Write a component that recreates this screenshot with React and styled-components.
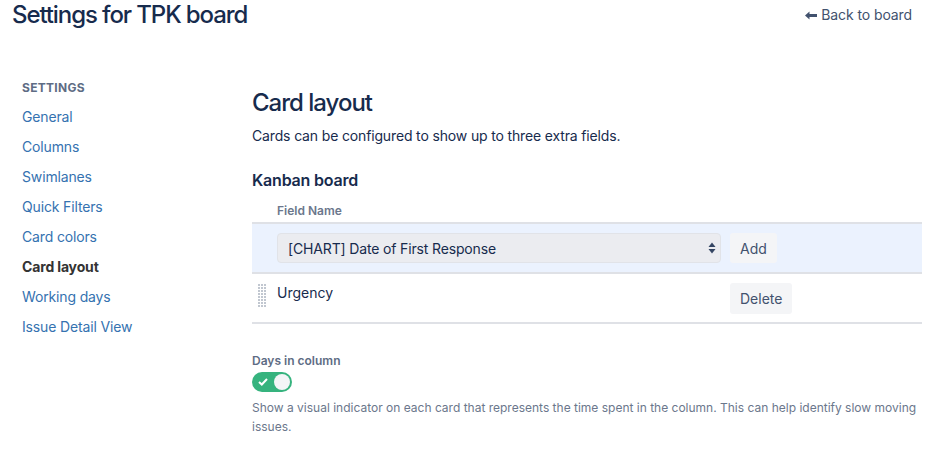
import React from "react";
import styled, { createGlobalStyle } from "styled-components";

const Global = createGlobalStyle`
  html, body { margin: 0; padding: 0; background: #fff; }
  body { font-family: Inter, "Noto Sans", sans-serif; color: #172B4D; }
  * { box-sizing: border-box; }
`;

const Page = styled.div`
  width: 936px;
  height: 456px;
  overflow: hidden;
`;

const Header = styled.header`
  display: flex;
  justify-content: space-between;
  align-items: flex-start;
  padding: 1px 24px 0 12px;
`;

const Title = styled.h1`
  margin: 0;
  font-size: 24px;
  line-height: 28px;
  font-weight: 500;
  color: #172B4D;
  letter-spacing: -1.1px;
`;

const BackLink = styled.a`
  display: flex;
  align-items: center;
  gap: 3px;
  margin-top: 4px;
  font-size: 14px;
  line-height: 20px;
  color: #42526E;
  text-decoration: none;
  letter-spacing: -0.1px;
`;

const Body = styled.div`
  display: grid;
  grid-template-columns: 230px 670px;
  padding: 51px 0 0 22px;
`;

const Sidebar = styled.nav`
  display: flex;
  flex-direction: column;
`;

const SideHeading = styled.div`
  font-size: 12px;
  line-height: 16px;
  font-weight: 700;
  color: #5E6C84;
  letter-spacing: 0.3px;
  margin-bottom: 6px;
`;

const SideItem = styled.a`
  font-size: 14px;
  line-height: 30px;
  color: ${(p) => (p.$active ? "#333333" : "#3572B0")};
  font-weight: ${(p) => (p.$active ? 700 : 400)};
  text-decoration: none;
  letter-spacing: -0.15px;
`;

const Main = styled.main`
  display: flex;
  flex-direction: column;
  padding-top: 9px;
`;

const H2 = styled.h2`
  margin: 0;
  font-size: 24px;
  line-height: 28px;
  font-weight: 500;
  color: #172B4D;
  letter-spacing: -1px;
`;

const Lead = styled.p`
  margin: 9px 0 0;
  font-size: 14px;
  line-height: 20px;
  color: #172B4D;
  letter-spacing: -0.15px;
`;

const H3 = styled.h3`
  margin: 24px 0 0;
  font-size: 16px;
  line-height: 20px;
  font-weight: 600;
  color: #172B4D;
  letter-spacing: -0.2px;
`;

const Table = styled.div`
  margin-top: 13px;
  display: flex;
  flex-direction: column;
`;

const HeadRow = styled.div`
  padding: 0 0 3px 25px;
  font-size: 12px;
  line-height: 16px;
  font-weight: 600;
  color: #6B778C;
  border-bottom: 2px solid #DFE1E6;
`;

const Row = styled.div`
  display: grid;
  grid-template-columns: 25px 444px 1fr;
  align-items: ${(p) => (p.$top ? "start" : "center")};
  height: 50px;
  padding: ${(p) => (p.$top ? "9px 0 0" : "0")};
  background: ${(p) => (p.$highlight ? "#EBF2FE" : "#fff")};
  border-bottom: 2px solid #DFE1E6;
`;

const Handle = styled.div`
  display: flex;
  justify-content: center;
  padding: 1px 4px 0 0;
`;

const Select = styled.div`
  position: relative;
  display: flex;
  align-items: center;
  height: 30px;
  padding: 0 10px;
  background: #EBECF0;
  border: 1px solid #E1E3E8;
  border-radius: 4px;
  font-size: 14px;
  color: #172B4D;
  letter-spacing: -0.15px;
`;

const SelectArrows = styled.svg`
  position: absolute;
  right: 4px;
  top: 8px;
`;

const FieldText = styled.div`
  font-size: 14px;
  line-height: 20px;
  color: #172B4D;
`;

const Actions = styled.div`
  padding-left: 9px;
`;

const Button = styled.button`
  height: ${(p) => (p.$tall ? "31px" : "30px")};
  padding: 0 10px;
  border: none;
  border-radius: 3px;
  background: #F4F5F7;
  color: #42526E;
  font-family: inherit;
  font-size: 14px;
`;

const Label = styled.div`
  margin-top: 29px;
  font-size: 12px;
  line-height: 16px;
  font-weight: 600;
  color: #5E6C84;
`;

const Toggle = styled.div`
  margin-top: 3px;
  width: 40px;
  height: 20px;
  border-radius: 10px;
  background: #36B37E;
  display: flex;
  align-items: center;
  justify-content: space-between;
  padding: 0 2px 0 6px;
`;

const Knob = styled.span`
  width: 16px;
  height: 16px;
  border-radius: 50%;
  background: #F4F5F7;
`;

const Help = styled.p`
  margin: 6px 0 0;
  font-size: 12px;
  line-height: 19px;
  color: #6B778C;
`;

const DragDots = () => (
  <svg width="9" height="23" viewBox="0 0 9 23">
    {Array.from({ length: 8 }).map((_, r) =>
      [0, 1, 2].map((c) => (
        <rect key={`${r}-${c}`} x={c * 3} y={r * 3} width="2" height="2" fill="#C1C7D0" />
      ))
    )}
  </svg>
);

const items = [
  "General",
  "Columns",
  "Swimlanes",
  "Quick Filters",
  "Card colors",
  "Card layout",
  "Working days",
  "Issue Detail View",
];

export default function App() {
  return (
    <Page>
      <Global />
      <Header>
        <Title>Settings for TPK board</Title>
        <BackLink href="#">
          <svg width="13" height="9" viewBox="0 0 13 9">
            <path d="M0 4.5 L4.5 0.5 V3 H12 V6 H4.5 V8.5 Z" fill="#42526E" />
          </svg>
          Back to board
        </BackLink>
      </Header>
      <Body>
        <Sidebar>
          <SideHeading>SETTINGS</SideHeading>
          {items.map((it) => (
            <SideItem key={it} href="#" $active={it === "Card layout"}>
              {it}
            </SideItem>
          ))}
        </Sidebar>
        <Main>
          <H2>Card layout</H2>
          <Lead>Cards can be configured to show up to three extra fields.</Lead>
          <H3>Kanban board</H3>
          <Table>
            <HeadRow>Field Name</HeadRow>
            <Row $highlight>
              <span />
              <Select>
                [CHART] Date of First Response
                <SelectArrows width="8" height="12" viewBox="0 0 8 12">
                  <path d="M4 0.5 L7.5 5 H0.5 Z" fill="#344563" />
                  <path d="M4 11.5 L7.5 7 H0.5 Z" fill="#344563" />
                </SelectArrows>
              </Select>
              <Actions>
                <Button>Add</Button>
              </Actions>
            </Row>
            <Row $top>
              <Handle>
                <DragDots />
              </Handle>
              <FieldText>Urgency</FieldText>
              <Actions>
                <Button $tall>Delete</Button>
              </Actions>
            </Row>
          </Table>
          <Label>Days in column</Label>
          <Toggle>
            <svg width="10" height="8" viewBox="0 0 10 8">
              <path d="M1 4 L3.8 6.5 L9 1" stroke="#fff" strokeWidth="2" fill="none" />
            </svg>
            <Knob />
          </Toggle>
          <Help>
            Show a visual indicator on each card that represents the time spent in the column. This can help
            identify slow moving issues.
          </Help>
        </Main>
      </Body>
    </Page>
  );
}
